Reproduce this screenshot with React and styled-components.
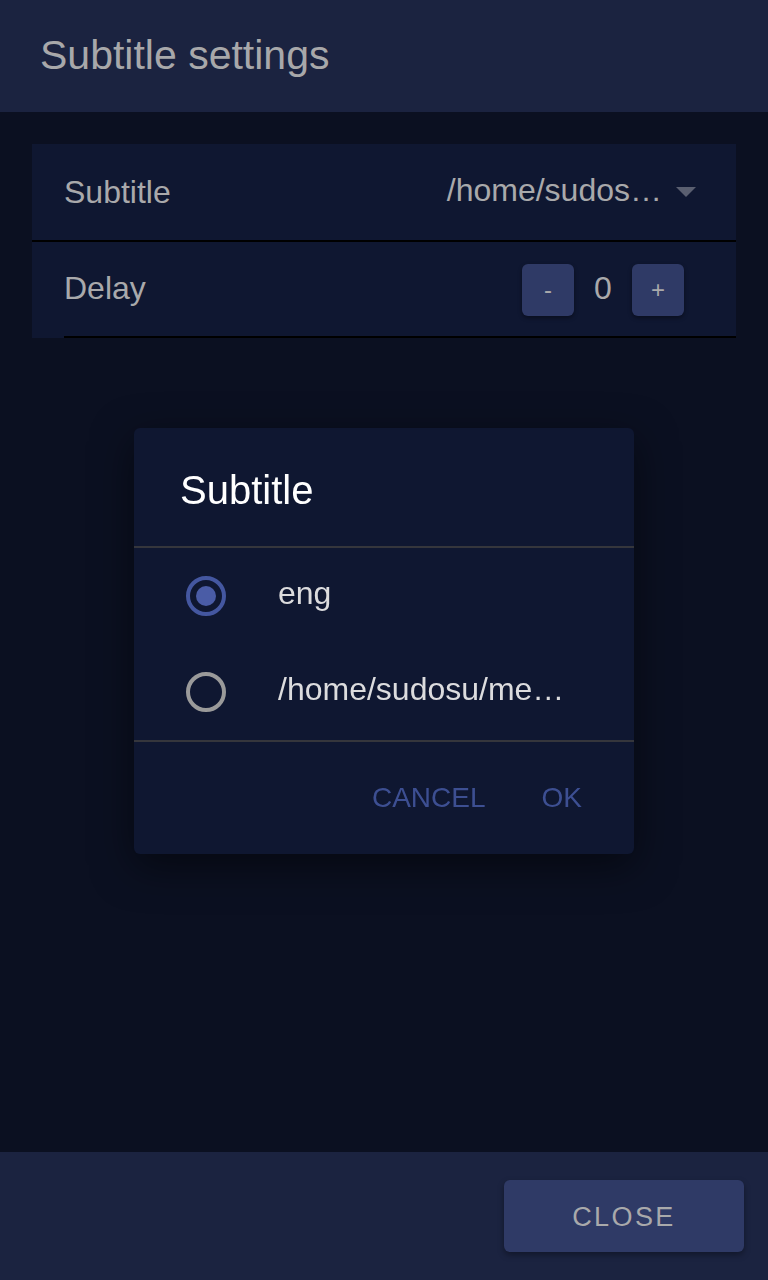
import React from 'react';
import styled, { createGlobalStyle } from 'styled-components';

const Global = createGlobalStyle`
  html, body {
    margin: 0;
    padding: 0;
    background: #0b1021;
    font-family: 'Liberation Sans', Arial, sans-serif;
  }
  * { box-sizing: border-box; }
`;

const Page = styled.div`
  display: flex;
  flex-direction: column;
  height: 100vh;
  background: #0b1021;
`;

const Header = styled.header`
  height: 112px;
  flex-shrink: 0;
  display: flex;
  align-items: center;
  padding: 0 40px 2px;
  background: #1b2340;
  color: #a8a8aa;
  font-size: 41px;
`;

const Main = styled.main`
  flex: 1;
  padding: 32px;
`;

const Card = styled.div`
  background: #0f1731;
`;

const Row = styled.div`
  height: ${p => p.$h}px;
  display: flex;
  align-items: center;
  justify-content: space-between;
  padding: 0 ${p => p.$pr}px 0 32px;
  border-bottom: 2px solid #000;
  ${p => p.$inset && `
    border-bottom: none;
    position: relative;
    &::after {
      content: '';
      position: absolute;
      left: 32px;
      right: 0;
      bottom: 0;
      height: 2px;
      background: #000;
    }
  `}
`;

const Label = styled.span`
  font-size: 32px;
  color: #a9a9ab;
  margin-top: ${p => p.$shift || 0}px;
`;

const Select = styled.div`
  display: flex;
  align-items: center;
  gap: 14px;
  font-size: 32px;
  color: #a9a9ab;
  margin-top: -4px;
`;

const Caret = styled.span`
  width: 0;
  height: 0;
  border-left: 10px solid transparent;
  border-right: 10px solid transparent;
  border-top: 10px solid #5a5f70;
  margin-top: 4px;
`;

const Stepper = styled.div`
  display: flex;
  align-items: center;
`;

const StepButton = styled.button`
  width: 52px;
  height: 52px;
  border: none;
  border-radius: 6px;
  background: #2f3a66;
  color: #a9a9ab;
  font-family: inherit;
  font-size: 24px;
  box-shadow: 0 2px 4px rgba(0, 0, 0, 0.4);
  display: flex;
  align-items: center;
  justify-content: center;
  padding: 0;
`;

const Value = styled.span`
  width: 58px;
  text-align: center;
  font-size: 32px;
  color: #a9a9ab;
  margin-top: -4px;
`;

const Footer = styled.footer`
  height: 128px;
  flex-shrink: 0;
  display: flex;
  align-items: center;
  justify-content: flex-end;
  padding: 0 24px;
  background: #1b2340;
`;

const CloseButton = styled.button`
  width: 240px;
  height: 72px;
  border: none;
  border-radius: 6px;
  background: #2f3a66;
  color: #a9a9ab;
  font-family: inherit;
  font-size: 27px;
  letter-spacing: 2.4px;
  padding-top: 3px;
  box-shadow: 0 3px 6px rgba(0, 0, 0, 0.35);
`;

const Overlay = styled.div`
  position: fixed;
  inset: 0;
  padding-top: 2px;
  display: flex;
  align-items: center;
  justify-content: center;
`;

const Dialog = styled.div`
  width: 500px;
  background: #0f1731;
  border-radius: 6px;
  box-shadow: 0 12px 40px rgba(0, 0, 0, 0.5);
`;

const DialogTitle = styled.h2`
  margin: 0;
  padding: 38px 46px 32px;
  font-size: 40px;
  line-height: 48px;
  font-weight: 400;
  color: #fff;
`;

const Divider = styled.div`
  height: 2px;
  background: #35363c;
`;

const Option = styled.label`
  height: 96px;
  display: flex;
  align-items: center;
  padding-left: 52px;
  gap: 52px;
`;

const Radio = styled.span`
  width: 40px;
  height: 40px;
  border-radius: 50%;
  border: 4px solid ${p => (p.$checked ? '#4457a0' : '#9a9a9a')};
  display: flex;
  align-items: center;
  justify-content: center;
  flex-shrink: 0;
  &::after {
    content: '';
    width: 20px;
    height: 20px;
    border-radius: 50%;
    background: ${p => (p.$checked ? '#4a5ca6' : 'transparent')};
  }
`;

const OptionText = styled.span`
  font-size: 32px;
  color: #dcdcde;
  margin-top: -6px;
`;

const Actions = styled.div`
  height: 112px;
  display: flex;
  align-items: center;
  justify-content: flex-end;
  padding-right: 36px;
  gap: 24px;
`;

const TextButton = styled.button`
  border: none;
  background: none;
  padding: 8px 16px;
  font-family: inherit;
  font-size: 28px;
  color: #3d4f92;
`;

const options = [
  { label: 'eng', checked: true },
  { label: '/home/sudosu/me…', checked: false },
];

export default function App() {
  return (
    <>
      <Global />
      <Page>
        <Header>Subtitle settings</Header>
        <Main>
          <Card>
            <Row $h={98} $pr={40}>
              <Label>Subtitle</Label>
              <Select>
                /home/sudos…
                <Caret />
              </Select>
            </Row>
            <Row $h={96} $pr={52} $inset>
              <Label $shift={-4}>Delay</Label>
              <Stepper>
                <StepButton>-</StepButton>
                <Value>0</Value>
                <StepButton>+</StepButton>
              </Stepper>
            </Row>
          </Card>
        </Main>
        <Footer>
          <CloseButton>CLOSE</CloseButton>
        </Footer>
      </Page>
      <Overlay>
        <Dialog>
          <DialogTitle>Subtitle</DialogTitle>
          <Divider />
          {options.map(o => (
            <Option key={o.label}>
              <Radio $checked={o.checked} />
              <OptionText>{o.label}</OptionText>
            </Option>
          ))}
          <Divider />
          <Actions>
            <TextButton>CANCEL</TextButton>
            <TextButton>OK</TextButton>
          </Actions>
        </Dialog>
      </Overlay>
    </>
  );
}
